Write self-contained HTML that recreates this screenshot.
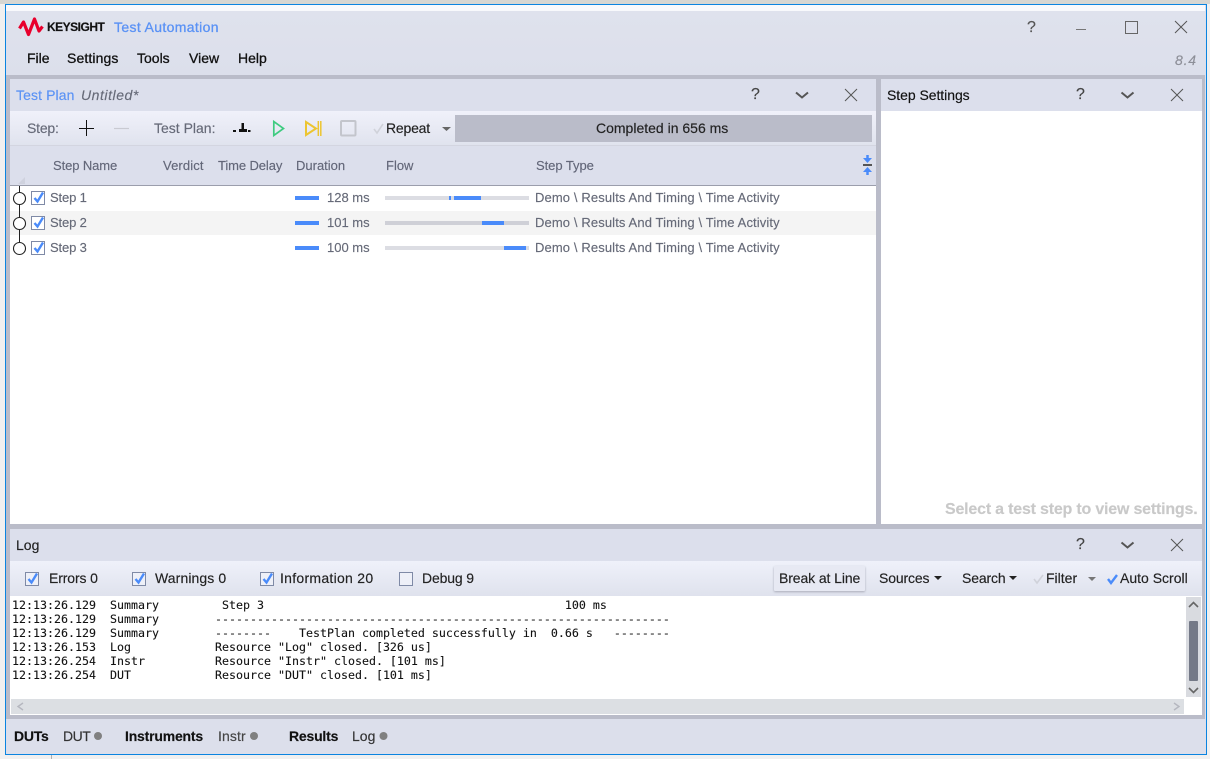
<!DOCTYPE html>
<html><head><meta charset="utf-8"><style>
html,body{margin:0;padding:0;width:1210px;height:759px;overflow:hidden;background:#f0f0f0}
body{position:relative;font-family:"Liberation Sans",sans-serif;font-size:14px;color:#111}
.b{position:absolute}
.t{position:absolute;line-height:20px;white-space:pre;-webkit-text-stroke:.15px}
.g{color:#666a78}
.s{font-size:13px;color:#666a78}
.h{font-size:13px;color:#636779}
.m{-webkit-text-stroke:.3px #111}
.log{position:absolute;left:12px;top:598px;font-family:"DejaVu Sans Mono",monospace;font-size:11.63px;line-height:14px;white-space:pre;color:#111;-webkit-text-stroke:.1px}
svg{position:absolute;left:0;top:0}
</style></head><body>
<div class="b" style="left:0;top:0;width:1210px;height:4px;background:#d6d6d2"></div>
<div class="b" style="left:51px;top:755px;width:1px;height:4px;background:#b0b0b0"></div>
<div class="b" style="left:5px;top:4px;width:1200px;height:749px;border:1px solid #0a84e0;background:#dcdfeb"></div>
<div class="b" style="left:6px;top:5px;width:1199px;height:6px;background:#f8f9fc"></div>
<div class="b" style="left:6px;top:11px;width:1199px;height:64px;background:linear-gradient(#dfe2ed,#dcdfeb)"></div>
<div class="b" style="left:6px;top:75px;width:1199px;height:644px;background:#babcc9"></div>
<div class="b" style="left:6px;top:719px;width:1199px;height:35px;background:#dcdfeb"></div>

<div class="b" style="left:10px;top:79px;width:866px;height:445px;background:#fff"></div>
<div class="b" style="left:10px;top:79px;width:866px;height:32px;background:#dcdfec"></div>
<div class="b" style="left:10px;top:111px;width:866px;height:34px;background:linear-gradient(#f0f1fa,#e0e3ee)"></div>
<div class="b" style="left:10px;top:145px;width:866px;height:1px;background:#d3d5e0"></div>
<div class="b" style="left:10px;top:146px;width:866px;height:39px;background:#dcdfec"></div>
<div class="b" style="left:10px;top:185px;width:866px;height:1px;background:#9b9eac"></div>
<div class="b" style="left:10px;top:211px;width:866px;height:24px;background:#f4f4f4"></div>
<div class="b" style="left:455px;top:115px;width:417px;height:27px;background:#babcc9"></div>

<div class="b" style="left:881px;top:79px;width:321px;height:445px;background:#fff"></div>
<div class="b" style="left:881px;top:79px;width:321px;height:32px;background:#dcdfec"></div>

<div class="b" style="left:10px;top:529px;width:1192px;height:186px;background:#fff"></div>
<div class="b" style="left:10px;top:529px;width:1192px;height:32px;background:#dcdfec"></div>
<div class="b" style="left:10px;top:561px;width:1192px;height:35px;background:linear-gradient(#eff1fa,#dfe2ed)"></div>
<div class="b" style="left:11px;top:699px;width:1173px;height:15px;background:#dcdfe3"></div>
<div class="b" style="left:1186px;top:597px;width:15px;height:100px;background:#d9dbe0"></div>
<div class="b" style="left:1189px;top:621px;width:9px;height:60px;background:#747987;border-radius:1px"></div>
<div class="b" style="left:774px;top:566px;width:91px;height:25px;background:#e7e9f3;box-shadow:0 1px 2px #a9abb8;border-radius:1px"></div>

<!-- Flow and duration bars -->
<div class="b" style="left:295px;top:196px;width:24px;height:4px;background:#4a8bfa"></div>
<div class="b" style="left:295px;top:221px;width:24px;height:4px;background:#4a8bfa"></div>
<div class="b" style="left:295px;top:246px;width:24px;height:4px;background:#4a8bfa"></div>
<div class="b" style="left:385px;top:196px;width:144px;height:4px;background:#dcdde3"></div>
<div class="b" style="left:449px;top:196px;width:2px;height:4px;background:#4a8bfa"></div>
<div class="b" style="left:454px;top:196px;width:27px;height:4px;background:#4a8bfa"></div>
<div class="b" style="left:385px;top:221px;width:144px;height:4px;background:#cfd0d7"></div>
<div class="b" style="left:482px;top:221px;width:22px;height:4px;background:#4a8bfa"></div>
<div class="b" style="left:385px;top:246px;width:144px;height:4px;background:#dcdde3"></div>
<div class="b" style="left:504px;top:246px;width:22px;height:4px;background:#4a8bfa"></div>

<svg width="1210" height="759" viewBox="0 0 1210 759" fill="none">
<!-- Logo -->
<polyline points="19.5,28.5 23.5,22 28.500,34.500 34.500,19 39,31 42.500,26.500" stroke="#e8002c" stroke-width="3.2" stroke-linejoin="round"/>
<!-- Window controls -->
<path d="M1076 29.5H1086" stroke="#777" stroke-width="1"/>
<rect x="1125.5" y="21.5" width="12" height="12" stroke="#666" stroke-width="1"/>
<path d="M1175 21L1187 33M1187 21L1175 33" stroke="#555" stroke-width="1"/>
<!-- Panel chevrons and closes -->
<path d="M796 92.500L802 97.500L808 92.500" stroke="#555" stroke-width="2"/>
<path d="M845 89L857 101M857 89L845 101" stroke="#555" stroke-width="1"/>
<path d="M1121.5 92.500L1127.5 97.500L1133.5 92.500" stroke="#555" stroke-width="2"/>
<path d="M1171 89L1183 101M1183 89L1171 101" stroke="#555" stroke-width="1"/>
<path d="M1121.5 542.500L1127.5 547.500L1133.5 542.500" stroke="#555" stroke-width="2"/>
<path d="M1171 539L1183 551M1183 539L1171 551" stroke="#555" stroke-width="1"/>
<!-- Toolbar -->
<path d="M79 128.5H94M86.5 120V136" stroke="#111" stroke-width="1"/>
<path d="M114 128.5H129" stroke="#c9cad2" stroke-width="1.2"/>
<path d="M233 130h3v2h-3zM239 129h2.500v-6h2.500v6h3v3h-8zM248 130h2.500v2h-2.500z" fill="#111"/>
<path d="M273.8 121.5V135.5L283.5 128.5Z" stroke="#3ecb80" stroke-width="1.7"/>
<path d="M306 122V135L316 128.5Z" stroke="#ecc531" stroke-width="2"/>
<path d="M318.300 121V136M320.800 121V136" stroke="#ecc531" stroke-width="1.5"/>
<rect x="341" y="121" width="14.5" height="14.5" stroke="#c3c5cc" stroke-width="2" rx="1"/>
<path d="M374 129L377 133L383 124" stroke="#d0d2da" stroke-width="1.6"/>
<path d="M442 127H451L446.5 131Z" fill="#666"/>
<!-- Collapse icon -->
<path d="M867.500 155V160" stroke="#4a8bfa" stroke-width="2.500"/><path d="M863 158H872L867.500 163Z" fill="#4a8bfa"/>
<path d="M863 165H872" stroke="#555" stroke-width="2"/>
<path d="M863 172H872L867.500 167Z" fill="#4a8bfa"/><path d="M867.500 171V175" stroke="#4a8bfa" stroke-width="2.500"/>
<path d="M25 177V184H18Z" fill="#cfd2de"/>
<!-- Tree -->
<path d="M19.5 186V242" stroke="#222" stroke-width="1"/>
<circle cx="19.5" cy="198.5" r="6" fill="#fff" stroke="#222" stroke-width="1.1"/>
<circle cx="19.5" cy="223.5" r="6" fill="#fff" stroke="#222" stroke-width="1.1"/>
<circle cx="19.5" cy="248.5" r="6" fill="#fff" stroke="#222" stroke-width="1.1"/>
<!-- Row checkboxes -->
<rect x="31.5" y="191.5" width="13" height="13" fill="#fff" stroke="#7f8aa6"/><path d="M34.5 198L37.5 201.5L43 192.5" stroke="#4a8bfa" stroke-width="2.400"/>
<rect x="31.5" y="216.5" width="13" height="13" fill="#fff" stroke="#7f8aa6"/><path d="M34.5 223L37.5 226.5L43 217.5" stroke="#4a8bfa" stroke-width="2.400"/>
<rect x="31.5" y="241.5" width="13" height="13" fill="#fff" stroke="#7f8aa6"/><path d="M34.5 248L37.5 251.5L43 242.5" stroke="#4a8bfa" stroke-width="2.400"/>
<!-- Log checkboxes -->
<rect x="25.5" y="572.5" width="13" height="13" fill="#eef0f8" stroke="#7f8aa6"/><path d="M28.5 579L31.5 582.5L37 573.5" stroke="#4a8bfa" stroke-width="2.400"/>
<rect x="132.5" y="572.5" width="13" height="13" fill="#eef0f8" stroke="#7f8aa6"/><path d="M135.5 579L138.5 582.5L144 573.5" stroke="#4a8bfa" stroke-width="2.400"/>
<rect x="260.5" y="572.5" width="13" height="13" fill="#eef0f8" stroke="#7f8aa6"/><path d="M263.5 579L266.5 582.5L272 573.5" stroke="#4a8bfa" stroke-width="2.400"/>
<rect x="399.5" y="572.5" width="13" height="13" fill="#eef0f8" stroke="#7f8aa6"/>
<!-- Log toolbar marks -->
<path d="M934 576H942L938 580Z" fill="#222"/>
<path d="M1009 576H1017L1013 580Z" fill="#222"/>
<path d="M1034 579L1037 583L1043 575" stroke="#d0d2da" stroke-width="1.6"/>
<path d="M1088 577H1096L1092 581Z" fill="#777"/>
<path d="M1108 579L1111 583L1117 575" stroke="#4a8bfa" stroke-width="2.400"/>
<!-- Scroll arrows -->
<path d="M1189 607L1193.5 602.5L1198 607" stroke="#666" stroke-width="1.6"/>
<path d="M1189 688L1193.5 692.5L1198 688" stroke="#666" stroke-width="1.6"/>
<path d="M23 703L18 706.5L23 710" stroke="#b5b7bf" stroke-width="1.4"/>
<path d="M1174 703L1179 706.5L1174 710" stroke="#b5b7bf" stroke-width="1.4"/>
<!-- Status dots -->
<circle cx="98" cy="736" r="4" fill="#808080"/>
<circle cx="254" cy="736" r="4" fill="#808080"/>
<circle cx="383.500" cy="736" r="4" fill="#808080"/>
</svg>

<span class="t" style="left:47px;top:17px;font-size:12px;font-weight:bold;color:#111;letter-spacing:-.5px">KEYSIGHT</span>
<span class="t" style="left:114px;top:17px;color:#5a92f5;letter-spacing:.35px;-webkit-text-stroke:.3px">Test Automation</span>
<span class="t" style="left:1027px;top:18px;font-size:16px;color:#555">?</span>
<span class="t m" style="left:27px;top:48px">File</span>
<span class="t m" style="left:67px;top:48px;letter-spacing:.12px">Settings</span>
<span class="t m" style="left:137px;top:48px">Tools</span>
<span class="t m" style="left:189px;top:48px">View</span>
<span class="t m" style="left:238px;top:48px">Help</span>
<span class="t" style="left:1175px;top:50px;font-style:italic;color:#8d8f98;letter-spacing:.8px">8.4</span>

<span class="t" style="left:16px;top:85px;color:#5a92f5;letter-spacing:.1px">Test Plan</span>
<span class="t" style="left:81px;top:85px;font-style:italic;color:#666a78;letter-spacing:.55px">Untitled*</span>
<span class="t" style="left:751px;top:85px;font-size:16px;color:#444">?</span>
<span class="t" style="left:887px;top:85px;letter-spacing:-.05px">Step Settings</span>
<span class="t" style="left:1076px;top:85px;font-size:16px;color:#444">?</span>

<span class="t g" style="left:27px;top:118px;letter-spacing:-.2px">Step:</span>
<span class="t g" style="left:154px;top:118px">Test Plan:</span>
<span class="t" style="left:386px;top:118px;color:#222;letter-spacing:-.2px">Repeat</span>
<span class="t" style="left:596px;top:118px;color:#222">Completed in 656 ms</span>

<span class="t h" style="left:53px;top:156px;letter-spacing:-.1px">Step Name</span>
<span class="t h" style="left:163px;top:156px;letter-spacing:.12px">Verdict</span>
<span class="t h" style="left:218px;top:156px;letter-spacing:-.1px">Time Delay</span>
<span class="t h" style="left:296px;top:156px">Duration</span>
<span class="t h" style="left:386px;top:156px">Flow</span>
<span class="t h" style="left:536px;top:156px;letter-spacing:-.05px">Step Type</span>

<span class="t s" style="left:50px;top:188px;letter-spacing:-.15px">Step 1</span>
<span class="t s" style="left:327px;top:188px">128 ms</span>
<span class="t s" style="left:535px;top:188px;letter-spacing:.12px">Demo \ Results And Timing \ Time Activity</span>
<span class="t s" style="left:50px;top:213px;letter-spacing:-.15px">Step 2</span>
<span class="t s" style="left:327px;top:213px">101 ms</span>
<span class="t s" style="left:535px;top:213px;letter-spacing:.12px">Demo \ Results And Timing \ Time Activity</span>
<span class="t s" style="left:50px;top:238px;letter-spacing:-.15px">Step 3</span>
<span class="t s" style="left:327px;top:238px">100 ms</span>
<span class="t s" style="left:535px;top:238px;letter-spacing:.12px">Demo \ Results And Timing \ Time Activity</span>

<span class="t" style="left:945px;top:500px;font-size:16px;font-weight:bold;color:#c9c9c9;letter-spacing:-.2px">Select a test step to view settings.</span>

<span class="t" style="left:16px;top:535px;color:#222">Log</span>
<span class="t" style="left:1076px;top:535px;font-size:16px;color:#444">?</span>
<span class="t" style="left:49px;top:568px;color:#222;letter-spacing:-.12px">Errors 0</span>
<span class="t" style="left:155px;top:568px;color:#222;letter-spacing:.1px">Warnings 0</span>
<span class="t" style="left:280px;top:568px;color:#222;letter-spacing:.28px">Information 20</span>
<span class="t" style="left:422px;top:568px;color:#222;letter-spacing:-.14px">Debug 9</span>
<span class="t" style="left:779px;top:568px;color:#222;letter-spacing:-.1px">Break at Line</span>
<span class="t" style="left:879px;top:568px;color:#222;letter-spacing:-.15px">Sources</span>
<span class="t" style="left:962px;top:568px;color:#222;letter-spacing:-.15px">Search</span>
<span class="t" style="left:1046px;top:568px;color:#222">Filter</span>
<span class="t" style="left:1120px;top:568px;color:#222">Auto Scroll</span>

<div class="log">12:13:26.129  Summary         Step 3                                           100 ms
12:13:26.129  Summary        -----------------------------------------------------------------
12:13:26.129  Summary        --------    TestPlan completed successfully in  0.66 s   --------
12:13:26.153  Log            Resource "Log" closed. [326 us]
12:13:26.254  Instr          Resource "Instr" closed. [101 ms]
12:13:26.254  DUT            Resource "DUT" closed. [101 ms]</div>

<span class="t" style="left:14px;top:726px;font-weight:bold;letter-spacing:-.25px">DUTs</span>
<span class="t" style="left:63px;top:726px;color:#333;letter-spacing:-.5px">DUT</span>
<span class="t" style="left:125px;top:726px;font-weight:bold;letter-spacing:-.2px">Instruments</span>
<span class="t" style="left:218px;top:726px;color:#444;letter-spacing:.1px">Instr</span>
<span class="t" style="left:289px;top:726px;font-weight:bold;letter-spacing:-.2px">Results</span>
<span class="t" style="left:352px;top:726px;color:#333">Log</span>
</body></html>
